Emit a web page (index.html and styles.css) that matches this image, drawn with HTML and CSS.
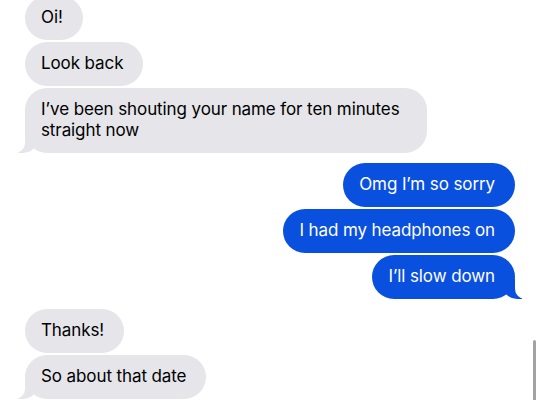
FILE: index.html
```html
<!DOCTYPE html>
<html lang="en">
<head>
    <meta charset="UTF-8">
    <meta name="viewport" content="width=device-width, initial-scale=1.0">
    <title>Messages</title>
    <link rel="stylesheet" href="styles.css">
</head>
<body>
    <div id="thread">
        <div class="msg in">Oi!</div>
        <div class="msg in">Look back</div>
        <div class="msg in tail">I’ve been shouting your name for ten minutes straight now</div>

        <div class="msg out first">Omg I’m so sorry</div>
        <div class="msg out">I had my headphones on</div>
        <div class="msg out tail">I’ll slow down</div>

        <div class="msg in first">Thanks!</div>
        <div class="msg in tail">So about that date</div>
    </div>
    <div id="scrollbar"></div>
</body>
</html>
```

FILE: styles.css
```css
*{
    margin: 0;
    padding: 0;
    box-sizing: border-box;
}
body{
    background: #ffffff;
    font-family: Inter, "Liberation Sans", sans-serif;
    font-size: 17px;
    letter-spacing: -0.1px;
    overflow: hidden;
}
#thread{
    display: flex;
    flex-direction: column;
    gap: 2px;
    padding: 0 25px;
    margin-top: -4px;
}
.msg{
    position: relative;
    max-width: 402px;
    padding: 11px 20px 12px 16px;
    line-height: 21px;
    border-radius: 22px;
}
.in{
    align-self: flex-start;
    background: #e5e5ea;
    color: #000000;
}
.out{
    align-self: flex-end;
    background: #0a50df;
    color: #ffffff;
}
.first{
    margin-top: 8px;
}
/*气泡尾巴*/
.tail::before,
.tail::after{
    content: "";
    position: absolute;
    bottom: 0;
    height: 20px;
}
.in.tail::before{
    left: -7px;
    width: 20px;
    background: #e5e5ea;
    border-bottom-right-radius: 15px;
}
.in.tail::after{
    left: -10px;
    width: 10px;
    background: #ffffff;
    border-bottom-right-radius: 10px;
}
.out.tail::before{
    right: -7px;
    width: 20px;
    background: #0a50df;
    border-bottom-left-radius: 15px;
}
.out.tail::after{
    right: -10px;
    width: 10px;
    background: #ffffff;
    border-bottom-left-radius: 10px;
}
#scrollbar{
    position: absolute;
    right: 4px;
    top: 340px;
    width: 3px;
    height: 70px;
    border-radius: 2px;
    background: #a3a3a3;
}
```
